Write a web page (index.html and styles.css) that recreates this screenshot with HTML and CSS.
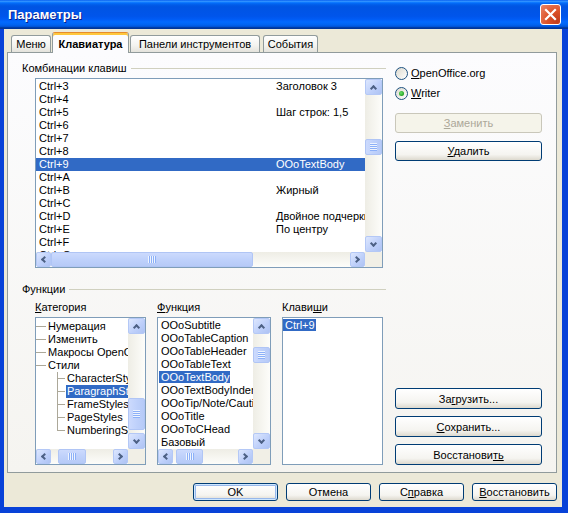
FILE: index.html
```html
<!DOCTYPE html>
<html lang="ru">
<head>
  <meta charset="UTF-8">
  <title>Параметры</title>
  <link rel="stylesheet" href="styles.css">
</head>
<body>
  <div class="window">
    <div class="titlebar">
      <span class="title">Параметры</span>
      <div class="close-btn">
        <svg width="13" height="13" viewBox="0 0 13 13"><path d="M2 2 L11 11 M11 2 L2 11" stroke="#fff" stroke-width="2.2" stroke-linecap="square"/></svg>
      </div>
    </div>

    <div class="client">
      <div class="tabs">
        <div class="tab tab-menu">Меню</div>
        <div class="tab tab-active">Клавиатура</div>
        <div class="tab tab-toolbars">Панели инструментов</div>
        <div class="tab tab-events">События</div>
      </div>

      <div class="tab-page">
        <div class="left-col">
          <div class="group-head">Комбинации клавиш</div>

          <div class="listbox shortcuts">
            <div class="list-body">
              <div class="row"><span>Ctrl+3</span><span>Заголовок 3</span></div>
              <div class="row"><span>Ctrl+4</span><span></span></div>
              <div class="row"><span>Ctrl+5</span><span>Шаг строк: 1,5</span></div>
              <div class="row"><span>Ctrl+6</span><span></span></div>
              <div class="row"><span>Ctrl+7</span><span></span></div>
              <div class="row"><span>Ctrl+8</span><span></span></div>
              <div class="row sel"><span>Ctrl+9</span><span>OOoTextBody</span></div>
              <div class="row"><span>Ctrl+A</span><span></span></div>
              <div class="row"><span>Ctrl+B</span><span>Жирный</span></div>
              <div class="row"><span>Ctrl+C</span><span></span></div>
              <div class="row"><span>Ctrl+D</span><span>Двойное подчеркивание</span></div>
              <div class="row"><span>Ctrl+E</span><span>По центру</span></div>
              <div class="row"><span>Ctrl+F</span><span></span></div>
              <div class="row"><span>Ctrl+G</span><span></span></div>
            </div>
            <div class="vscroll">
              <div class="sb-btn"><i class="arrow up"></i></div>
              <div class="sb-track"><div class="thumb" style="margin-top:44px;height:16px"><i class="grip"></i></div></div>
              <div class="sb-btn"><i class="arrow down"></i></div>
            </div>
            <div class="hscroll">
              <div class="sb-btn"><i class="arrow left"></i></div>
              <div class="sb-track"><div class="thumb" style="margin-left:0;width:202px"><i class="grip"></i></div></div>
              <div class="sb-btn"><i class="arrow right"></i></div>
            </div>
            <div class="corner"></div>
          </div>

          <div class="group-head group-func">Функции</div>

          <div class="func-grid">
            <div class="sublabel"><u>К</u>атегория</div>
            <div class="sublabel"><u>Ф</u>ункция</div>
            <div class="sublabel">Клави<u>ш</u>и</div>

            <div class="listbox category">
              <div class="list-body">
                <div class="tree-row"><i class="branch l1"></i><span>Нумерация</span></div>
                <div class="tree-row"><i class="branch l1"></i><span>Изменить</span></div>
                <div class="tree-row"><i class="branch l1"></i><span>Макросы OpenOffice.org</span></div>
                <div class="tree-row"><i class="branch l1"></i><span>Стили</span></div>
                <div class="tree-row l2"><i class="branch"></i><span>CharacterStyles</span></div>
                <div class="tree-row l2"><i class="branch"></i><span class="sel">ParagraphStyles</span></div>
                <div class="tree-row l2"><i class="branch"></i><span>FrameStyles</span></div>
                <div class="tree-row l2"><i class="branch"></i><span>PageStyles</span></div>
                <div class="tree-row l2"><i class="branch last"></i><span>NumberingStyles</span></div>
              </div>
              <div class="vscroll">
                <div class="sb-btn"><i class="arrow up"></i></div>
                <div class="sb-track"><div class="thumb" style="margin-top:64px;height:32px"><i class="grip"></i></div></div>
                <div class="sb-btn"><i class="arrow down"></i></div>
              </div>
              <div class="hscroll">
                <div class="sb-btn"><i class="arrow left"></i></div>
                <div class="sb-track"><div class="thumb" style="margin-left:7px;width:28px"><i class="grip"></i></div></div>
                <div class="sb-btn"><i class="arrow right"></i></div>
              </div>
              <div class="corner"></div>
            </div>

            <div class="listbox functions">
              <div class="list-body">
                <div class="row"><span>OOoSubtitle</span></div>
                <div class="row"><span>OOoTableCaption</span></div>
                <div class="row"><span>OOoTableHeader</span></div>
                <div class="row"><span>OOoTableText</span></div>
                <div class="row"><span class="sel">OOoTextBody</span></div>
                <div class="row"><span>OOoTextBodyIndent</span></div>
                <div class="row"><span>OOoTip/Note/Caution</span></div>
                <div class="row"><span>OOoTitle</span></div>
                <div class="row"><span>OOoToCHead</span></div>
                <div class="row"><span>Базовый</span></div>
              </div>
              <div class="vscroll">
                <div class="sb-btn"><i class="arrow up"></i></div>
                <div class="sb-track"><div class="thumb" style="margin-top:13px;height:16px"><i class="grip"></i></div></div>
                <div class="sb-btn"><i class="arrow down"></i></div>
              </div>
              <div class="hscroll">
                <div class="sb-btn"><i class="arrow left"></i></div>
                <div class="sb-track"><div class="thumb" style="margin-left:3px;width:27px"><i class="grip"></i></div></div>
                <div class="sb-btn"><i class="arrow right"></i></div>
              </div>
              <div class="corner"></div>
            </div>

            <div class="listbox keys">
              <div class="row"><span class="sel">Ctrl+9</span></div>
            </div>
          </div>
        </div>

        <div class="right-col">
          <div class="radio radio-first"><i class="radio-dot"></i><span><u>O</u>penOffice.org</span></div>
          <div class="radio"><i class="radio-dot on"></i><span><u>W</u>riter</span></div>
          <div class="btn btn-side btn-disabled btn-replace"><span><u>З</u>аменить</span></div>
          <div class="btn btn-side btn-delete"><span><u>У</u>далить</span></div>

          <div class="side-bottom">
            <div class="btn btn-side btn-tall"><span>За<u>г</u>рузить...</span></div>
            <div class="btn btn-side btn-tall"><span><u>С</u>охранить...</span></div>
            <div class="btn btn-side btn-tall"><span>Восстанови<u>ть</u></span></div>
          </div>
        </div>
      </div>

      <div class="dialog-buttons">
        <div class="btn btn-default">OK</div>
        <div class="btn">Отмена</div>
        <div class="btn">С<u>п</u>равка</div>
        <div class="btn"><span><u>В</u>осстановить</span></div>
      </div>
    </div>
  </div>
</body>
</html>
```

FILE: styles.css
```css
* {
  box-sizing: border-box;
}

body {
  margin: 0;
  font-family: "Liberation Sans", Arial, sans-serif;
  font-size: 11px;
  color: #000;
  background: #fff;
}

u {
  text-decoration: underline;
}

.window {
  width: 568px;
  height: 513px;
  display: flex;
  flex-direction: column;
  background: #0842D8;
  overflow: hidden;
}

/* title bar */

.titlebar {
  height: 29px;
  flex: none;
  display: flex;
  align-items: center;
  justify-content: space-between;
  padding: 0 7px 0 8px;
  background: linear-gradient(to bottom, #0058EE 0%, #3593FF 4%, #288EFF 6%, #127DFF 8%, #036FFC 10%, #0262EE 14%, #0057E5 20%, #0054E3 24%, #0055EB 56%, #005BF5 66%, #026AFE 76%, #0062EF 86%, #0052D6 92%, #0040AB 94%, #003092 100%);
}

.title {
  color: #fff;
  font-weight: bold;
  font-size: 13px;
  text-shadow: 1px 1px #0A1E8A;
}

.close-btn {
  width: 21px;
  height: 21px;
  border: 1px solid #fff;
  border-radius: 3px;
  background: radial-gradient(circle at 85% 85%, #C13C1C 0%, #DD5228 45%, #E8866A 100%);
  display: flex;
  align-items: center;
  justify-content: center;
}

/* dialog body */

.client {
  flex: 1;
  margin: 0 6px 6px 4px;
  background: #ECE9D8;
  display: flex;
  flex-direction: column;
}

.tabs {
  height: 20px;
  margin: 3px 0 0 7px;
  display: flex;
  align-items: flex-end;
}

.tab {
  height: 17px;
  border: 1px solid #919B9C;
  border-bottom: none;
  border-radius: 3px 3px 0 0;
  background: linear-gradient(#FFFFFF, #F3F3EF 60%, #E4E3DC);
  display: flex;
  align-items: center;
  justify-content: center;
  margin-right: 1px;
  white-space: nowrap;
}

.tab-menu { width: 40px; }
.tab-toolbars { width: 130px; margin-right: 3px; }
.tab-events { width: 55px; }

.tab-active {
  width: 77px;
  height: 21px;
  margin-bottom: -1px;
  position: relative;
  z-index: 1;
  font-weight: bold;
  background: #FCFCFE;
  border-top-color: #E68B2C;
  box-shadow: inset 0 2px 0 #FFC73C;
  padding-top: 1px;
}

.tab-page {
  height: 421px;
  margin: 0 5px 0 3px;
  border: 1px solid #919B9C;
  background: linear-gradient(#FCFCFE, #F5F4F0);
  padding: 8px 14px 9px 14px;
  display: grid;
  grid-template-columns: 1fr 147px;
  column-gap: 9px;
}

.left-col {
  display: flex;
  flex-direction: column;
  min-width: 0;
}

.group-head {
  height: 14px;
  line-height: 14px;
  display: flex;
  align-items: center;
  white-space: nowrap;
}

.group-head::after {
  content: "";
  flex: 1;
  margin-left: 4px;
  border-top: 1px solid #D0D0BF;
}

.group-func {
  margin-top: 14px;
}

/* list boxes */

.listbox {
  border: 1px solid #7F9DB9;
  background: #fff;
  display: grid;
  grid-template-columns: minmax(0, 1fr) 17px;
  grid-template-rows: minmax(0, 1fr) 15px;
  overflow: hidden;
}

.shortcuts {
  width: 348px;
  height: 190px;
  margin: 3px 0 0 13px;
}

.list-body {
  overflow: hidden;
  padding-top: 1px;
}

.row {
  height: 13px;
  line-height: 13px;
  white-space: nowrap;
  padding-left: 3px;
}

.shortcuts .row {
  display: grid;
  grid-template-columns: 237px auto;
}

.row.sel,
.sel {
  background: #316AC5;
  color: #fff;
}

.func-grid {
  flex: 1;
  margin: 4px 0 0 13px;
  display: grid;
  grid-template-columns: 111px 114px 101px;
  grid-template-rows: 14px minmax(0, 1fr);
  column-gap: 11px;
  row-gap: 3px;
}

.sublabel {
  line-height: 14px;
  white-space: nowrap;
}

.category .list-body {
  padding-top: 2px;
}

.tree-row {
  height: 13px;
  line-height: 13px;
  display: flex;
  align-items: stretch;
  white-space: nowrap;
}

.tree-row span {
  padding: 0 1px;
  margin-left: 1px;
}

.tree-row.l2 {
  padding-left: 21px;
}

.branch {
  flex: none;
  width: 8px;
  background:
    linear-gradient(#ACA899, #ACA899) no-repeat 0 6px / 100% 1px,
    linear-gradient(#ACA899, #ACA899) no-repeat 0 0 / 1px 100%;
}

.branch.l1 {
  width: 10px;
  background: linear-gradient(#ACA899, #ACA899) no-repeat 0 6px / 100% 1px;
}

.branch.last {
  background:
    linear-gradient(#ACA899, #ACA899) no-repeat 0 6px / 100% 1px,
    linear-gradient(#ACA899, #ACA899) no-repeat 0 0 / 1px 7px;
}

.functions .row {
  padding-left: 1px;
}

.functions .row span {
  padding: 0 1px 0 2px;
}

.keys {
  display: block;
  padding-top: 1px;
}

.keys .row {
  padding-left: 0;
}

.keys .row span {
  padding: 0 1px 0 2px;
}

/* scrollbars */

.vscroll {
  display: flex;
  flex-direction: column;
  background: linear-gradient(to right, #EEEDE5, #FDFDFA);
}

.hscroll {
  display: flex;
  background: linear-gradient(#EEEDE5, #FDFDFA);
}

.sb-btn {
  flex: none;
  height: 16px;
  border: 1px solid #B4C8F6;
  border-radius: 2px;
  background: linear-gradient(135deg, #DDE7FE, #BDCFFA 60%, #AEC3F3);
  display: flex;
  align-items: center;
  justify-content: center;
}

.hscroll .sb-btn {
  width: 15px;
  height: auto;
}

.sb-track {
  flex: 1;
  display: flex;
  flex-direction: column;
  min-height: 0;
  min-width: 0;
}

.hscroll .sb-track {
  flex-direction: row;
}

.thumb {
  flex: none;
  border: 1px solid #B0C5F5;
  border-radius: 2px;
  background: linear-gradient(to right, #CCDAFD, #BFD1FB 50%, #B6CAF7);
  display: flex;
  align-items: center;
  justify-content: center;
}

.hscroll .thumb {
  background: linear-gradient(#CCDAFD, #BFD1FB 50%, #B6CAF7);
}

.grip {
  width: 7px;
  height: 8px;
  background: repeating-linear-gradient(to bottom, #EEF4FE 0 1px, #8CB0F8 1px 2px);
}

.hscroll .grip {
  width: 8px;
  height: 7px;
  background: repeating-linear-gradient(to right, #EEF4FE 0 1px, #8CB0F8 1px 2px);
}

.arrow {
  width: 5px;
  height: 5px;
  border-left: 2px solid #4D6185;
  border-top: 2px solid #4D6185;
}

.arrow.up { transform: translateY(1px) rotate(45deg); }
.arrow.down { transform: translateY(-1px) rotate(225deg); }
.arrow.left { transform: translateX(1px) rotate(-45deg); }
.arrow.right { transform: translateX(-1px) rotate(135deg); }

.corner {
  background: #F1EFE6;
}

/* right column */

.right-col {
  display: flex;
  flex-direction: column;
}

.radio {
  height: 14px;
  display: flex;
  align-items: center;
  margin-top: 6px;
  white-space: nowrap;
}

.radio-first {
  margin-top: 5px;
}

.radio-dot {
  width: 13px;
  height: 13px;
  margin-right: 3px;
  border: 1px solid #1C5180;
  border-radius: 50%;
  background: linear-gradient(135deg, #DCD9CE, #FFFFFF);
  display: flex;
  align-items: center;
  justify-content: center;
}

.radio-dot.on::after {
  content: "";
  width: 5px;
  height: 5px;
  border-radius: 50%;
  background: radial-gradient(circle at 40% 40%, #6BE06B, #21A121 70%, #1A8E1A);
}

.btn {
  height: 18px;
  border: 1px solid #003C74;
  border-radius: 3px;
  background: linear-gradient(#FFFFFF, #F5F4F0 70%, #DDD9CE);
  display: flex;
  align-items: center;
  justify-content: center;
  white-space: nowrap;
}

.btn-side {
  height: 20px;
}

.btn-replace {
  margin-top: 13px;
}

.btn-delete {
  margin-top: 8px;
}

.btn-disabled {
  border-color: #C9C7BA;
  background: #F5F4EA;
  color: #ACA899;
}

.side-bottom {
  margin-top: auto;
  display: flex;
  flex-direction: column;
  gap: 7px;
}

.btn-tall {
  height: 21px;
}

/* bottom buttons */

.dialog-buttons {
  display: flex;
  justify-content: flex-end;
  gap: 8px;
  margin: 10px 5px 0 0;
}

.dialog-buttons .btn {
  width: 85px;
}

.btn-default {
  box-shadow: inset 0 0 0 1px #CEE7FF, inset 0 0 0 2px #98B8EA;
}
```
